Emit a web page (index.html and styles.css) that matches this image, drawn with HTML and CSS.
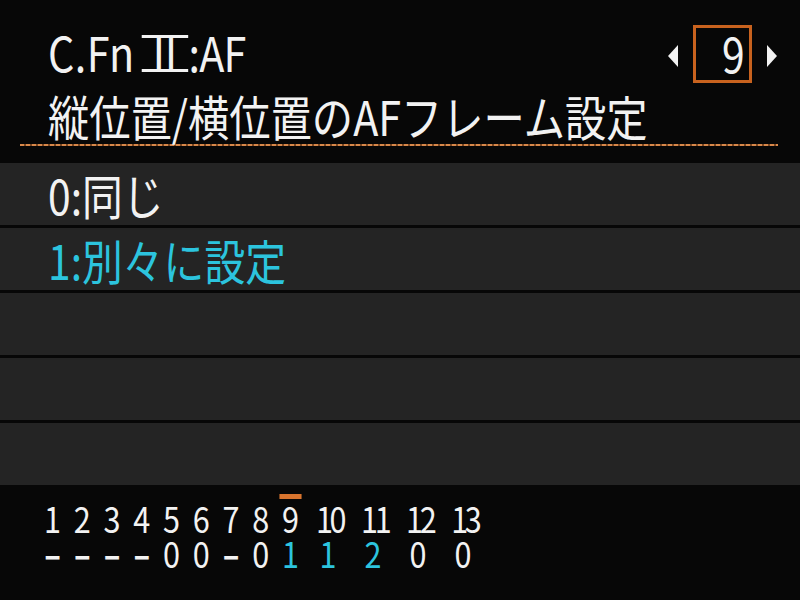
FILE: index.html
```html
<!DOCTYPE html>
<html lang="ja">
<head>
<meta charset="utf-8">
<title>C.Fn II:AF</title>
<link rel="stylesheet" href="styles.css">
</head>
<body>
<div class="screen">
  <header class="header">
    <div class="title">
      <div class="line l1">C.Fn <span class="roman">Ⅱ</span><span class="tail">:AF</span></div>
      <div class="line">縦位置/横位置のAFフレーム設定</div>
    </div>
    <div class="nav">
      <svg class="arrow" width="12" height="22" viewBox="0 0 12 22"><polygon points="11,0 11,22 1,11" fill="#f2f2f2"/></svg>
      <div class="box"><span class="page">9</span></div>
      <svg class="arrow" width="12" height="22" viewBox="0 0 12 22"><polygon points="1,0 1,22 11,11" fill="#f2f2f2"/></svg>
    </div>
  </header>
  <div class="rule"></div>
  <div class="rows">
    <div class="row"><span class="opt">0:同じ</span></div>
    <div class="row"><span class="opt sel">1:別々に設定</span></div>
    <div class="row"></div>
    <div class="row"></div>
    <div class="row"></div>
  </div>
  <footer class="footer">
    <div class="strip">
      <div class="col"><i class="mark"></i><span class="num">1</span><span class="val dash">–</span></div>
      <div class="col"><i class="mark"></i><span class="num">2</span><span class="val dash">–</span></div>
      <div class="col"><i class="mark"></i><span class="num">3</span><span class="val dash">–</span></div>
      <div class="col"><i class="mark"></i><span class="num">4</span><span class="val dash">–</span></div>
      <div class="col"><i class="mark"></i><span class="num">5</span><span class="val">0</span></div>
      <div class="col"><i class="mark"></i><span class="num">6</span><span class="val">0</span></div>
      <div class="col"><i class="mark"></i><span class="num">7</span><span class="val dash">–</span></div>
      <div class="col"><i class="mark"></i><span class="num">8</span><span class="val">0</span></div>
      <div class="col active"><i class="mark"></i><span class="num">9</span><span class="val cy">1</span></div>
      <div class="col wide"><i class="mark"></i><span class="num">10</span><span class="val cy">1</span></div>
      <div class="col wide"><i class="mark"></i><span class="num">11</span><span class="val cy">2</span></div>
      <div class="col wide"><i class="mark"></i><span class="num">12</span><span class="val">0</span></div>
      <div class="col wide"><i class="mark"></i><span class="num">13</span><span class="val">0</span></div>
    </div>
  </footer>
</div>
</body>
</html>
```

FILE: styles.css
```css
html, body {
  margin: 0;
  padding: 0;
  background: #070707;
}
.screen {
  width: 800px;
  height: 600px;
  overflow: hidden;
  background: #070707;
  color: #f2f2f2;
  font-family: "Noto Sans CJK JP", "Noto Sans", sans-serif;
}
.header {
  height: 144px;
  display: flex;
  justify-content: space-between;
  align-items: flex-start;
}
.title {
  flex: 1 1 auto;
  min-width: 0;
  padding: 19px 0 0 48px;
  font-size: 48px;
  line-height: 64px;
}
.line {
  white-space: nowrap;
  transform: scaleX(0.86);
  transform-origin: 0 0;
}
.l1 {
  letter-spacing: 0.5px;
  word-spacing: -3px;
}
.tail {
  letter-spacing: -1px;
}
.roman {
  display: inline-block;
  line-height: 32px;
  padding: 0 3px 5px;
  background:
    linear-gradient(#f2f2f2, #f2f2f2) top / 100% 3px no-repeat,
    linear-gradient(#f2f2f2, #f2f2f2) bottom / 100% 3px no-repeat;
}
.nav {
  flex: 0 0 auto;
  margin: 25px 22px 0 0;
  display: flex;
  align-items: center;
  gap: 14px;
}
.arrow {
  display: block;
  margin-top: 3px;
}
.box {
  width: 49px;
  height: 52px;
  padding-right: 4px;
  border: 3px solid #c8621e;
  display: flex;
  justify-content: flex-end;
  align-items: flex-start;
}
.page {
  display: block;
  font-size: 48px;
  line-height: 48px;
  transform: scaleX(0.85);
  transform-origin: 100% 0;
}
.rule {
  height: 2px;
  margin: 0 22px 0 20px;
  background: repeating-linear-gradient(90deg, #d8884a 0 4px, #7a4620 4px 6px);
}
.rows {
  margin-top: 17px;
  display: flex;
  flex-direction: column;
  gap: 3px;
}
.row {
  height: 62px;
  background: #242424;
  padding-left: 48px;
  display: flex;
  align-items: center;
  font-size: 48px;
  line-height: 62px;
}
.opt {
  white-space: nowrap;
  transform: scaleX(0.85);
  transform-origin: 0 50%;
}
.sel {
  color: #2cc4de;
}
.footer {
  padding: 9px 0 0 44px;
}
.strip {
  display: flex;
  gap: 15px;
  transform: scaleX(0.85);
  transform-origin: 0 0;
}
.col {
  width: 20px;
  display: flex;
  flex-direction: column;
  align-items: center;
  font-size: 36px;
  line-height: 35px;
}
.col.wide {
  width: 38px;
}
.num, .val {
  display: block;
  white-space: nowrap;
  height: 35px;
}
.num {
  letter-spacing: -4px;
  margin-right: -4px;
}
.col:not(.wide) .num {
  letter-spacing: 0;
  margin-right: 0;
}
.dash {
  font-weight: 700;
}
.mark {
  display: block;
  width: 26px;
  height: 5px;
  margin-bottom: 1px;
}
.active .mark {
  background: #d8742e;
}
.cy {
  color: #2cc4de;
}
```
